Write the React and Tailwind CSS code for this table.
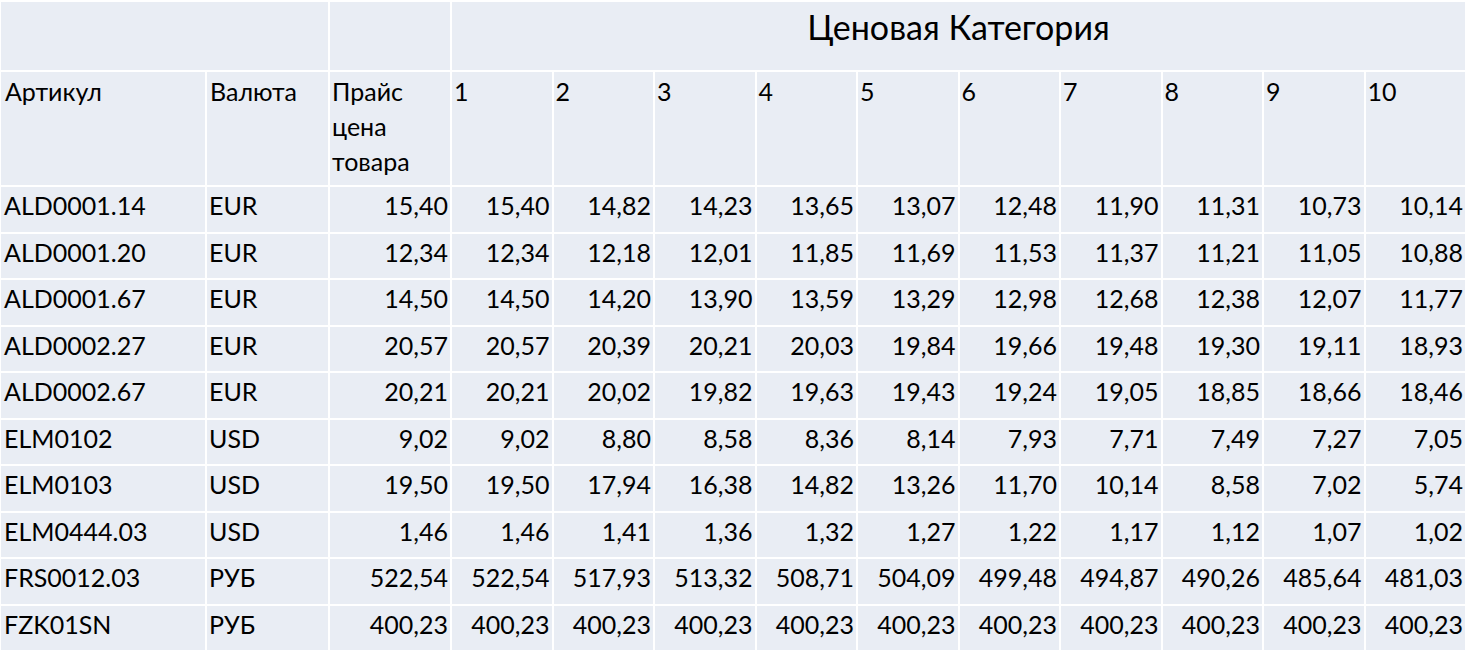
import React from "react";

const rows = [
  ["ALD0001.14", "EUR", "15,40", ["15,40","14,82","14,23","13,65","13,07","12,48","11,90","11,31","10,73","10,14"]],
  ["ALD0001.20", "EUR", "12,34", ["12,34","12,18","12,01","11,85","11,69","11,53","11,37","11,21","11,05","10,88"]],
  ["ALD0001.67", "EUR", "14,50", ["14,50","14,20","13,90","13,59","13,29","12,98","12,68","12,38","12,07","11,77"]],
  ["ALD0002.27", "EUR", "20,57", ["20,57","20,39","20,21","20,03","19,84","19,66","19,48","19,30","19,11","18,93"]],
  ["ALD0002.67", "EUR", "20,21", ["20,21","20,02","19,82","19,63","19,43","19,24","19,05","18,85","18,66","18,46"]],
  ["ELM0102", "USD", "9,02", ["9,02","8,80","8,58","8,36","8,14","7,93","7,71","7,49","7,27","7,05"]],
  ["ELM0103", "USD", "19,50", ["19,50","17,94","16,38","14,82","13,26","11,70","10,14","8,58","7,02","5,74"]],
  ["ELM0444.03", "USD", "1,46", ["1,46","1,41","1,36","1,32","1,27","1,22","1,17","1,12","1,07","1,02"]],
  ["FRS0012.03", "РУБ", "522,54", ["522,54","517,93","513,32","508,71","504,09","499,48","494,87","490,26","485,64","481,03"]],
  ["FZK01SN", "РУБ", "400,23", ["400,23","400,23","400,23","400,23","400,23","400,23","400,23","400,23","400,23","400,23"]],
];

const cell = "bg-[#e9edf4] text-black";

export default function App() {
  return (
    <div
      className="w-[1468px] h-[651px] overflow-hidden bg-white pt-[2px] pl-[1px] pr-[3px]"
      style={{ fontFamily: "Lato, 'Open Sans', sans-serif" }}
    >
      <div className="grid grid-cols-[204px_121px_120px_repeat(10,1fr)] grid-rows-[68px_113px_repeat(10,44.5px)] gap-[2px] text-[25px] leading-[35px]">
        <div className={`${cell} col-span-2`}></div>
        <div className={cell}></div>
        <div className={`${cell} col-span-10 flex justify-center pt-[5px] text-[34px] leading-[40px]`}>
          Ценовая Категория
        </div>

        <div className={`${cell} pl-[4px] pt-[2px]`}>Артикул</div>
        <div className={`${cell} pl-[3px] pt-[2px]`}>Валюта</div>
        <div className={`${cell} pl-[2px] pt-[2px]`}>
          Прайс
          <br />
          цена
          <br />
          товара
        </div>
        {[1, 2, 3, 4, 5, 6, 7, 8, 9, 10].map((n) => (
          <div key={n} className={`${cell} pl-[2px] pt-[2px]`}>{n}</div>
        ))}

        {rows.map(([art, cur, price, vals]) => (
          <React.Fragment key={art}>
            <div className={`${cell} pl-[3px] pb-[7px] flex items-center`}>{art}</div>
            <div className={`${cell} pl-[2px] pb-[7px] flex items-center`}>{cur}</div>
            <div className={`${cell} pr-[2px] pb-[7px] flex items-center justify-end`}>{price}</div>
            {vals.map((v, i) => (
              <div key={i} className={`${cell} pr-[2px] pb-[7px] flex items-center justify-end`}>{v}</div>
            ))}
          </React.Fragment>
        ))}
      </div>
    </div>
  );
}
